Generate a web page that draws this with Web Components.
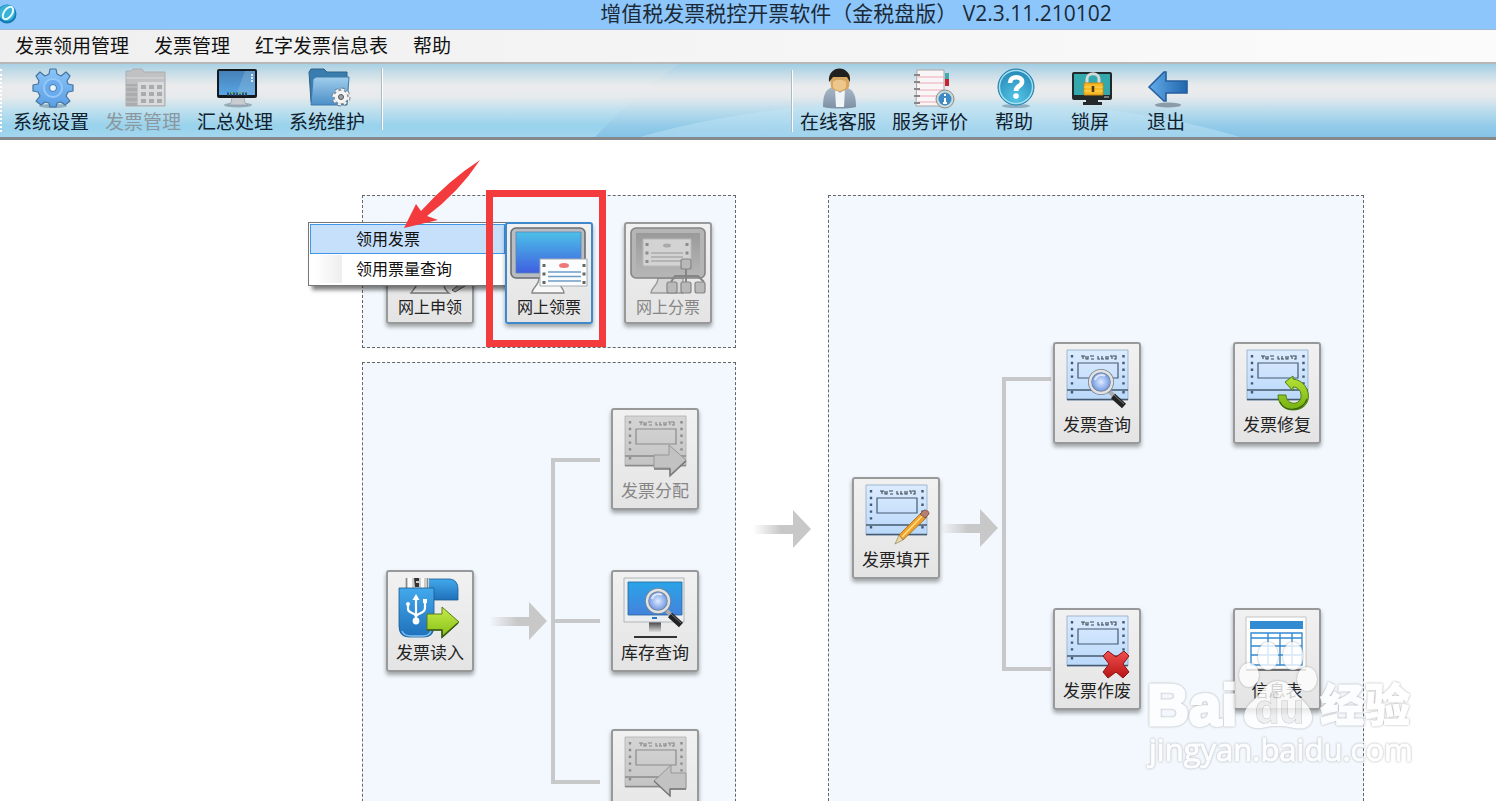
<!DOCTYPE html>
<html lang="zh-CN">
<head>
<meta charset="utf-8">
<title>增值税发票税控开票软件</title>
<style>
  body {
    margin: 0;
    height: 100vh;
    overflow: hidden;
    background: #fff;
    color: #111;
    font-family: "Open Sans", "Noto Sans CJK SC", sans-serif;
  }
</style>
</head>
<body>
<tax-app></tax-app>

<script>
// drawings for the 40x40 toolbar icons
const toolIcons = {
  gear: `
    <defs><linearGradient id="g" x1="0" y1="0" x2="0" y2="1"><stop offset="0" stop-color="#8cc4f8"/><stop offset="1" stop-color="#5a9fe4"/></linearGradient></defs>
    <ellipse cx="20" cy="38" rx="14" ry="2" fill="#6d8ea3" opacity=".6"/>
    <path d="M17 1h6l1 5 4 2 5-4 4 4-3 5 1 3 5 1v6l-5 1-2 4 4 5-5 4-4-3-4 1-1 4h-6l-1-4-4-1-4 3-5-4 4-5-2-4-5-1v-6l5-1 1-3-3-5 4-4 5 4 4-2z" fill="url(#g)" stroke="#43749f" stroke-width="1.2" stroke-linejoin="round"/>
    <circle cx="20" cy="20" r="9" fill="#69abec" stroke="#94c8f8" stroke-width="2"/>
    <circle cx="20" cy="20" r="3.5" fill="#eef4f8" stroke="#3c78b4"/>`,
  ledger: `
    <path d="M1 38V3h5l2-2h9l2 3h21v34z" fill="#bfc1c3" stroke="#acaeb0"/>
    <path d="M1 10h38" stroke="#dcdcdc"/><path d="M1 16h11v22H1z" fill="#aaacae"/>
    <path d="M1 19h11M1 24h11M1 29h11M1 34h11" stroke="#c6c8ca"/>
    <path d="M13 14h26v23H13z" fill="#dadbdc"/>
    <path d="M16 17h5v4h-5zM24 17h5v4h-5zM32 17h5v4h-5zM16 24h5v4h-5zM24 24h5v4h-5zM32 24h5v4h-5zM16 31h5v4h-5zM24 31h5v4h-5zM32 31h5v4h-5z" fill="#a9abad"/>`,
  desktop: `
    <defs><linearGradient id="g" x1="0" y1="0" x2="0" y2="1"><stop offset="0" stop-color="#4680b8"/><stop offset="1" stop-color="#58a7e4"/></linearGradient></defs>
    <ellipse cx="21" cy="37" rx="14" ry="2.5" fill="#7d97a6" opacity=".7"/>
    <path d="M15 29h12l1 6 3 2H11l3-2z" fill="#c9cdd0" stroke="#8c9499" stroke-width=".6"/>
    <rect x="0" y="1" width="40" height="29" rx="2" fill="#15191d"/>
    <path d="M2 3h36v24H2z" fill="url(#g)"/><path d="M28 3h10v24H19z" fill="#8bbbe0" opacity=".4"/>
    <path d="M10 26h20" stroke="#2c4f72" stroke-width="3" stroke-dasharray="2 1"/>
    <path d="M14 25h2M22 25h2" stroke="#59b95c" stroke-width="2"/>
    <path d="M35 6v8" stroke="#ddebf5" stroke-width="2" stroke-dasharray="2 1"/>`,
  folder: `
    <defs><linearGradient id="g" x1="0" y1="0" x2="0" y2="1"><stop offset="0" stop-color="#a0cdec"/><stop offset="1" stop-color="#4b8fc8"/></linearGradient></defs>
    <path d="M0 4l2-3h13l3 3h20v30H2z" fill="#397cae" stroke="#2c638d"/>
    <path d="M4 11l3-2h33l-2 28H2z" fill="url(#g)" stroke="#3f7baa"/>
    <circle cx="32" cy="29" r="7" fill="#f3f4f5" stroke="#72777b"/>
    <circle cx="32" cy="29" r="8" fill="none" stroke="#72777b" stroke-width="3" stroke-dasharray="3 3.3"/>
    <circle cx="32" cy="29" r="7.4" fill="none" stroke="#f3f4f5" stroke-width="2.4" stroke-dasharray="3 2.8"/>
    <circle cx="32" cy="29" r="2.5" fill="#9da3a7" stroke="#555"/>`,
  person: `
    <defs><linearGradient id="g" x1="0" y1="0" x2="0" y2="1"><stop offset="0" stop-color="#a9b9c9"/><stop offset="1" stop-color="#7d90a4"/></linearGradient></defs>
    <path d="M3 39c0-11 2-18 10-20h12c9 2 11 9 11 20-8 2-25 2-33 0z" fill="url(#g)"/>
    <path d="M15 21l5 4 5-4-1 18h-8z" fill="#f1f5f8"/>
    <path d="M10 9c-1-8 20-9 20 0l-1 10c-4 6-14 6-18 0z" fill="#d7a661"/>
    <path d="M9 14C7-4 32-4 30 14l-3-5H13z" fill="#22201f"/>
    <path d="M13 14c3-3 10-3 13 0v5c-3 5-10 5-13 0z" fill="#edc68b"/>`,
  notes: `
    <path d="M5 2h27v36H4z" fill="#f8f6f7" stroke="#a9a4a6"/>
    <path d="M6 9h26M6 15h26M6 22h26M6 28h26M6 34h20" stroke="#efaab5"/>
    <path d="M2 7h6M2 14h6M2 21h6M2 28h6M2 35h6" stroke="#8b8687" stroke-width="2"/>
    <path d="M33 5h4v6h-4z" fill="#44a9b0"/><path d="M33 11h4v7h-4z" fill="#c8242f"/>
    <circle cx="33" cy="31" r="9" fill="#cfd8d6" stroke="#82918e"/><circle cx="33" cy="31" r="6.5" fill="#3e8cc6"/>
    <path d="M33 30v5M33 26v2M31 35h4" stroke="#fff" stroke-width="2"/>`,
  help: `
    <defs><radialGradient id="g" cx=".5" cy=".8" r=".8"><stop offset="0" stop-color="#54c5e6"/><stop offset="1" stop-color="#2486b5"/></radialGradient></defs>
    <ellipse cx="20" cy="38" rx="14" ry="2" fill="#6d8ea3" opacity=".6"/>
    <circle cx="20" cy="19" r="18" fill="url(#g)" stroke="#2481ac"/>
    <circle cx="20" cy="19" r="16.5" fill="none" stroke="#a5def0" stroke-width="1.4"/>
    <path d="M14 15c0-8 13-7 12-1 0 4-6 4-6 9" fill="none" stroke="#fff" stroke-width="4.6"/><circle cx="20" cy="28" r="2.8" fill="#fff"/>`,
  lock: `
    <path d="M14 30h12v4h4v3H11v-3h3z" fill="#24282a"/>
    <rect x="0" y="4" width="40" height="28" rx="2" fill="#23282b"/>
    <path d="M2 6h36v21H2z" fill="#33a9ae"/><path d="M32 29h5" stroke="#d0d0d0"/>
    <path d="M15 17v-6c0-7 12-7 12 0v6" fill="none" stroke="#d5d9d8" stroke-width="3"/>
    <path d="M12 15h19v12H12z" fill="#f7ba25" stroke="#c98613"/><path d="M12 19h19M12 23h19" stroke="#ffd75b"/>
    <path d="M21 18v6" stroke="#54370c" stroke-width="2.6"/>`,
  back: `
    <defs><linearGradient id="g"><stop offset="0" stop-color="#63abe9"/><stop offset="1" stop-color="#2066ac"/></linearGradient></defs>
    <ellipse cx="20" cy="37" rx="13" ry="2.6" fill="#798b97" opacity=".8"/>
    <path d="M1 19L16 4h2v9h21v12H18v8h-2z" fill="url(#g)" stroke="#255f9f" stroke-width="1.6"/>`
};

// invoice sheet, shared by most of the tiles
function sheet(grey) {
  const line = grey ? "#8b8b8b" : "#46596f";
  const marks = grey ? "#858585" : "#3d4650";
  return `
    <defs><linearGradient id="s" x1="0" y1="0" x2="0" y2="1">
      <stop offset="0" stop-color="${grey ? "#d5d5d5" : "#dcecff"}"/><stop offset="1" stop-color="${grey ? "#c4c4c4" : "#b9d8fa"}"/>
    </linearGradient></defs>
    <path d="M14 8h61v50H14z" fill="url(#s)" stroke="${grey ? "#b0b0b0" : "#8fa9c8"}" stroke-width=".8"/>
    <path d="M25 21h40v15H25z" fill="none" stroke="${line}" stroke-width="1.2"/>
    <path d="M14 48h61M14 57.5h61" stroke="${line}" stroke-width="1.6"/>
    <path d="M19 13v34M70.5 13v34M19 49v4M70.5 49v4" stroke="${line}" stroke-width="2.4" stroke-dasharray="2.4 4.4"/>
    <path d="M28 14h4M30 14v3M33 14v3h2v-3M37 14h4M38 17h3M45 14v3h2M49 14v3M48 17h3M53 14v3h2v-3M57 14h2v3M60 14h3v3h-2" fill="none" stroke="${marks}" stroke-width="1.1"/>`;
}

function magnifier(x, y) {
  return `<g transform="translate(${x} ${y})">
    <defs><radialGradient id="m"><stop offset="0" stop-color="#dfeaff"/><stop offset="1" stop-color="#5d8be0"/></radialGradient></defs>
    <path d="M8 9l5 5" stroke="#aaa" stroke-width="4"/>
    <path d="M12 14l11 10" stroke="#222" stroke-width="6"/><path d="M13 13l10 9" stroke="#777" stroke-width="1"/>
    <circle r="11" fill="url(#m)" stroke="#7b8189" stroke-width="4"/><circle r="11" fill="none" stroke="#dfe3e8" stroke-width="2.4"/>
    <path d="M-6-2c1-5 7-6 10-4" fill="none" stroke="#fff" stroke-width="2" opacity=".7"/></g>`;
}

// drawings for the tiles, in the tile's own pixels
const tileIcons = {
  apply: `
    <path d="M6 5h74v52H6z" fill="#bbb" stroke="#777" stroke-width="2"/>
    <path d="M33 56c0 6-5 11-8 15h38c-5-3-6-9-6-15z" fill="#f5f5f5" stroke="#777" stroke-width="1.4"/>
    <path d="M66 68l3 2 15-9-3-4z" fill="#aaa" stroke="#555"/>`,
  receive: `
    <defs><linearGradient id="g" x1="0" y1="0" x2="0" y2="1"><stop offset="0" stop-color="#4cc0e8"/><stop offset="1" stop-color="#405fe0"/></linearGradient></defs>
    <path d="M34 56c0 8-7 9-7 15h32c0-5-6-7-6-15z" fill="#f8f8f8" stroke="#888" stroke-width="1.4"/>
    <rect x="6" y="6" width="74" height="50" rx="5" fill="#b9bcc0" stroke="#696d72" stroke-width="1.6"/>
    <path d="M11 10h65v41H11z" fill="url(#g)" stroke="#5884b8" stroke-width=".8"/>
    <path d="M35 37h47v27H35z" fill="#fbfcfd" stroke="#a5abb1"/>
    <path d="M39 42v20M79 42v20" stroke="#666" stroke-width="3" stroke-dasharray="3 5.5"/>
    <ellipse cx="59" cy="43.5" rx="5" ry="2.5" fill="#ee7777"/>
    <path d="M43 50h33M43 54.5h33M43 59h33" stroke="#6d9cc8" stroke-width="1.6"/>`,
  share: `
    <defs><linearGradient id="g" x1="0" y1="0" x2="0" y2="1"><stop offset="0" stop-color="#9a9a9a"/><stop offset="1" stop-color="#b4b4b4"/></linearGradient></defs>
    <path d="M34 56c0 8-7 9-7 15h32V56z" fill="#d6d6d6" stroke="#9b9b9b" stroke-width="1.4"/>
    <rect x="7" y="6" width="74" height="50" rx="5" fill="#b5b5b5" stroke="#858585" stroke-width="1.6"/>
    <path d="M12 11h64v40H12z" fill="url(#g)"/>
    <path d="M19 17h48v27H19z" fill="#d3d3d3" stroke="#b8b8b8"/>
    <path d="M23 21v20M63 21v20" stroke="#8c8c8c" stroke-width="3" stroke-dasharray="3 5.5"/>
    <ellipse cx="43" cy="23.5" rx="4" ry="2" fill="#aaa"/><path d="M27 31h32M27 35h32M27 39h32" stroke="#aaa" stroke-width="1.4"/>
    <path d="M62 46v8M47 60l4-6h23l6 6M62 54v6" fill="none" stroke="#858585" stroke-width="2"/>
    <g fill="#b9b9b9" stroke="#858585" stroke-width="1.2"><rect x="57" y="37" width="10" height="10" rx="2"/><rect x="43" y="60" width="10" height="11" rx="2"/><rect x="57" y="60" width="10" height="11" rx="2"/><rect x="71" y="60" width="10" height="11" rx="2"/></g>`,
  assign: sheet(true) + `<path d="M43 47h15v-10l17 15-16 15v-7H43z" fill="#c2c2c2" stroke="#979797"/><path d="M43 61h16v7l16-15" fill="none" stroke="#777" stroke-width="1.4"/>`,
  giveback: sheet(true) + `<path d="M75 44H60v-8L43 52l16 15v-7h16z" fill="#c2c2c2" stroke="#979797"/><path d="M43 52l16 15v-7h16" fill="none" stroke="#777" stroke-width="1.4"/>`,
  usb: `
    <defs><linearGradient id="g" x1="0" y1="0" x2="0" y2="1"><stop offset="0" stop-color="#43a9ec"/><stop offset="1" stop-color="#1f70ba"/></linearGradient>
    <linearGradient id="a" x1="0" y1="0" x2="0" y2="1"><stop offset="0" stop-color="#c9ec4b"/><stop offset="1" stop-color="#82be13"/></linearGradient></defs>
    <path d="M40 9h24q8 1 8 10v11H44z" fill="url(#g)" stroke="#195b93" stroke-width=".8"/>
    <path d="M19 8h24v10H19z" fill="#ccc"/><path d="M22 8h4v10h-4zM35 8h3v10h-3z" fill="#fafafa"/>
    <path d="M20.500 8v10M41.500 8v10" stroke="#888"/><path d="M28 8h5v3h-3v2h3v4h-4z" fill="#333"/>
    <path d="M13 18h35v38q0 11-10 11H23q-10 0-10-11z" fill="url(#g)" stroke="#195b93" stroke-width=".8"/>
    <path d="M16 61q2 5 9 5h12q6 0 8-5" fill="none" stroke="#7dc2f2" stroke-width="1.4"/>
    <path d="M30 50V28M22 34v5c0 5 8 3 8 8 0-4 9-3 9-9v-5" fill="none" stroke="#fff" stroke-width="2.2"/>
    <path d="M26.5 30l3.500-6 3.500 6z" fill="#fff"/><circle cx="30" cy="51" r="3.4" fill="#fff"/><circle cx="22" cy="34" r="2" fill="#fff"/><path d="M37 29h4v4h-4z" fill="#fff"/>
    <path d="M41 44h15v-7l17 15-17 16v-8H41z" fill="url(#a)" stroke="#577b1b"/><path d="M41 60h15v7l16-14" fill="none" stroke="#3e5b16" stroke-width="1.6"/>`,
  stock: `
    <defs><linearGradient id="g" x1="0" y1="0" x2="0" y2="1"><stop offset="0" stop-color="#2aa4e8"/><stop offset="1" stop-color="#4482dc"/></linearGradient>
    <linearGradient id="n" x1="0" y1="0" x2="0" y2="1"><stop offset="0" stop-color="#444"/><stop offset="1" stop-color="#ddd"/></linearGradient></defs>
    <path d="M38 52h12v10H38z" fill="url(#n)"/>
    <path d="M13 8h60v44H13z" fill="#eceff2" stroke="#b2b5b8"/><path d="M17 12h54v33H17z" fill="url(#g)" stroke="#24669b" stroke-width=".8"/>
    <path d="M41 48h5" stroke="#2677c9" stroke-width="2"/><path d="M23 67h43" stroke="#333" stroke-width="2"/>` + magnifier(47, 31),
  query: sheet() + magnifier(48, 40),
  fill: sheet() + `
    <path d="M47 58L70 35l5 5-24 23z" fill="#f0a22b" stroke="#a3671b" stroke-width=".8"/><path d="M50 60l22-23" stroke="#ffe08a" stroke-width="1.4"/>
    <path d="M47 58l4 5-8 4z" fill="#ead7a4" stroke="#8a7b52" stroke-width=".6"/><path d="M68 37l4-4q5 0 5 4l-4 4z" fill="#b77f70" stroke="#6e4a40" stroke-width=".8"/>`,
  repair: sheet() + `
    <defs><linearGradient id="a" x1="0" y1="0" x2="0" y2="1"><stop offset="0" stop-color="#b9e336"/><stop offset="1" stop-color="#75b012"/></linearGradient></defs>
    <path d="M52 40l8-6v3c19 2 22 31 0 31-10 0-15-7-15-15h8c0 11 16 11 15 0 0-5-4-8-8-8v4z" fill="url(#a)" stroke="#4b7d12"/>
    <path d="M47 60c5 11 23 9 27-3" fill="none" stroke="#36600b" stroke-width="1.2"/>`,
  cancel: sheet() + `
    <defs><linearGradient id="a" x1="0" y1="0" x2="0" y2="1"><stop offset="0" stop-color="#f05050"/><stop offset="1" stop-color="#b91414"/></linearGradient></defs>
    <path d="M50 48l5-5 8 6 8-6 5 5-6 8 6 8-6 6-7-6-8 6-5-6 6-8z" fill="url(#a)" stroke="#8c1111"/>`,
  table: `
    <path d="M13 9h60v52H13z" fill="#fff" stroke="#b7b7b7" stroke-width=".8"/><path d="M17 13h53v8H17z" fill="#338bd2"/>
    <path d="M18 25h51v32H18zM18 30h51M18 38h51M18 47h51M35 25v32M47 25v32M59 25v32" fill="none" stroke="#338bd2" stroke-width="1.4"/>
    <path d="M13 62h60" stroke="#444" stroke-width="1.6"/>`
};

class TitleBar extends HTMLElement {
  constructor() {
    super();
    this.attachShadow({mode: "open"});
    this.shadowRoot.innerHTML = `
      <style>
        :host { display: flex; align-items: flex-start; height: 29px; background: #8cc6fb; border-bottom: 1px solid #a3b7d6; }
        svg { width: 18px; height: 20px; flex: none; margin-top: 4px; }
        h1 { flex: 1; margin: 0 0 0 198px; font-size: 21px; line-height: 26px; font-weight: 400; text-align: center; white-space: nowrap; color: #1c2a38; }
      </style>
      <svg viewBox="0 0 18 20">
        <circle cx="7" cy="10" r="9.5" fill="#147bb5"/><circle cx="7" cy="9" r="8" fill="#3bb3d8"/>
        <ellipse cx="8" cy="9" rx="4" ry="7" transform="rotate(35 8 9)" fill="none" stroke="#e5fbff" stroke-width="2"/>
      </svg>
      <h1><slot></slot></h1>`;
  }
}
customElements.define("title-bar", TitleBar);

class MenuBar extends HTMLElement {
  constructor() {
    super();
    this.attachShadow({mode: "open"});
    const items = this.getAttribute("items").split(",");
    this.shadowRoot.innerHTML = `
      <style>
        :host { display: block; background: linear-gradient(90deg, #efefef, #fbfbfb); border-bottom: 2px solid #b5b7b9; }
        nav { display: flex; gap: 25px; padding: 0 15px; }
        button { border: 0; padding: 0; background: none; font: inherit; font-size: 19px; line-height: 32px; color: #111; }
      </style>
      <nav>${items.map(item => `<button>${item}</button>`).join("")}</nav>`;
  }
}
customElements.define("menu-bar", MenuBar);

class ToolButton extends HTMLElement {
  constructor() {
    super();
    this.attachShadow({mode: "open"});
    this.shadowRoot.innerHTML = `
      <style>
        :host { display: block; min-width: 60px; }
        button { display: flex; flex-direction: column; align-items: center; width: 100%; border: 0; padding: 0; background: none; font: inherit; font-size: 19px; line-height: 24px; color: #10202c; white-space: nowrap; }
        button:disabled { color: #8b979e; }
        svg { width: 42px; height: 42px; overflow: visible; }
      </style>
      <button ${this.hasAttribute("disabled") ? "disabled" : ""}>
        <svg viewBox="-3 0 42 42">${toolIcons[this.getAttribute("icon")]}</svg>
        <slot></slot>
      </button>`;
  }
}
customElements.define("tool-button", ToolButton);

class ToolStrip extends HTMLElement {
  constructor() {
    super();
    this.attachShadow({mode: "open"});
    this.shadowRoot.innerHTML = `
      <style>
        :host {
          display: grid; grid-template: 73px / 792fr 704fr; position: relative; border-bottom: 3px solid #85898c;
          background: linear-gradient(#a9d1e4, #cbdfe8 10px, #ebebec 22px, #e6eaec 33px, #bfe0ee 46px, #98d2ec 62px, #a3d6ee);
        }
        .swoosh { position: absolute; inset: 0; width: 100%; height: 100%; }
        .group { position: relative; display: flex; gap: 16px; padding: 4px 0 0 13px; }
        .right { padding-left: 8px; }
        .grip { position: absolute; left: 0; top: 5px; bottom: 5px; border-left: 2px dotted #fff; }
        .left::after, .right::before { content: ""; width: 1px; height: 62px; border-left: 1px solid #a9bcc6; background: #fff; }
        .right::before { position: absolute; left: -1px; top: 6px; }
      </style>
      <svg class="swoosh" viewBox="0 0 1496 73" preserveAspectRatio="none">
        <defs><linearGradient id="w" x1="0" y1="0" x2="0" y2="1"><stop offset="0" stop-color="#9acbe3" stop-opacity=".6"/><stop offset=".35" stop-color="#eee" stop-opacity=".1"/><stop offset="1" stop-color="#6fb6e2" stop-opacity=".6"/></linearGradient></defs>
        <path d="M595 73Q640 25 680 0H1496V73z" fill="url(#w)"/>
        <path d="M640 73Q720 50 830 40Q1080 25 1240 73z" fill="#c3e7f7" opacity=".45"/>
      </svg>
      <div class="group left"><span class="grip"></span><slot></slot></div>
      <div class="group right"><slot name="right"></slot></div>`;
  }
}
customElements.define("tool-strip", ToolStrip);

class FlowTile extends HTMLElement {
  constructor() {
    super();
    this.attachShadow({mode: "open"});
    this.shadowRoot.innerHTML = `
      <style>
        :host { display: block; width: 88px; height: 102px; }
        button {
          display: flex; flex-direction: column; align-items: center; box-sizing: border-box; width: 100%; height: 100%; padding: 0;
          border: 2px solid #97999b; border-radius: 3px; background: linear-gradient(#f1f1f1, #e4e4e4);
          box-shadow: 0 3px 4px rgba(0, 0, 0, .35); font: inherit; font-size: 17px; line-height: 20px; color: #222; white-space: nowrap;
        }
        svg { width: 84px; height: 71px; flex: none; }
        button:disabled { color: #868686; }
        :host([active]) button { border-color: #3e88cc; }
        :host([small]) button { font-size: 16px; line-height: 24px; }
      </style>
      <button ${this.hasAttribute("disabled") ? "disabled" : ""}>
        <svg viewBox="2 2 84 71">${tileIcons[this.getAttribute("icon")]}</svg>
        <slot></slot>
      </button>`;
  }
}
customElements.define("flow-tile", FlowTile);

class FlowArrow extends HTMLElement {
  constructor() {
    super();
    this.attachShadow({mode: "open"});
    this.shadowRoot.innerHTML = `
      <style>
        :host { display: block; width: 58px; height: 38px; }
        svg { display: block; }
      </style>
      <svg width="58" height="38">
        <defs><linearGradient id="g"><stop offset="0" stop-color="#c8c8c8" stop-opacity="0"/><stop offset=".7" stop-color="#c8c8c8"/></linearGradient></defs>
        <path d="M0 15h40v9H0z" fill="url(#g)"/><path d="M40 0l18 19-18 19z" fill="#c8c8c8"/>
      </svg>`;
  }
}
customElements.define("flow-arrow", FlowArrow);

class FlowBracket extends HTMLElement {
  constructor() {
    super();
    this.attachShadow({mode: "open"});
    this.shadowRoot.innerHTML = `
      <style>
        :host { display: block; box-sizing: border-box; border: 4px solid #c6c8ca; border-right: 0; }
        :host([middle]) { background: linear-gradient(#c6c8ca, #c6c8ca) 0 50% / 100% 4px no-repeat; }
      </style>`;
  }
}
customElements.define("flow-bracket", FlowBracket);

class DropMenu extends HTMLElement {
  constructor() {
    super();
    this.attachShadow({mode: "open"});
    const items = this.getAttribute("items").split(",");
    this.shadowRoot.innerHTML = `
      <style>
        :host { display: block; box-sizing: border-box; width: 199px; padding: 1px; border: 1px solid #777; background: #fff; box-shadow: 4px 4px 4px rgba(0, 0, 0, .5); }
        button {
          display: block; box-sizing: border-box; width: 100%; border: 1px solid transparent; padding: 0 0 0 45px; text-align: left;
          font: inherit; font-size: 16px; line-height: 28px; color: #111; background: linear-gradient(90deg, #fff, #eee) 3px 0 / 28px 100% no-repeat;
        }
        button:first-of-type { border-color: #3f96e8; background: #c6e0fb; }
      </style>
      ${items.map(item => `<button>${item}</button>`).join("")}`;
  }
}
customElements.define("drop-menu", DropMenu);

class WaterMark extends HTMLElement {
  constructor() {
    super();
    this.attachShadow({mode: "open"});
    this.shadowRoot.innerHTML = `
      <style>
        :host { display: block; pointer-events: none; }
        svg { display: block; filter: drop-shadow(0 0 1px #999); opacity: .8; }
        text { fill: #fff; stroke: #fff; stroke-width: 1px; paint-order: stroke; }
        .name { font: 700 58px "Liberation Sans", sans-serif; stroke-width: 3px; }
        .du { font: 700 40px "Liberation Sans", sans-serif; fill: #eee; stroke: #bbb; }
        .cn { font: 900 45px "Noto Sans CJK SC", sans-serif; }
        .url { font: 400 31px "Open Sans", sans-serif; }
      </style>
      <svg width="276" height="140">
        <text class="name" x="1" y="89">Bai</text>
        <g fill="#fff">
          <ellipse cx="103" cy="39" rx="10" ry="12"/><ellipse cx="122" cy="20" rx="10" ry="14"/>
          <ellipse cx="147" cy="20" rx="10" ry="14"/><ellipse cx="161" cy="43" rx="10" ry="12"/>
          <path d="M132 45c12 0 15 11 24 19 18 16 10 32-8 28q-16-4-32 0c-20 3-24-16-8-28 9-8 12-19 24-19z"/>
        </g>
        <text class="du" x="109" y="87">du</text>
        <text class="cn" x="174" y="86">经验</text>
        <text class="url" x="3" y="125">jingyan.baidu.com</text>
      </svg>`;
  }
}
customElements.define("water-mark", WaterMark);

class TaxApp extends HTMLElement {
  constructor() {
    super();
    this.attachShadow({mode: "open"});
    this.shadowRoot.innerHTML = `
      <style>
        :host { display: flex; flex-direction: column; height: 100%; overflow: hidden; }
        main {
          flex: 1; min-height: 0; position: relative; display: grid; grid-template-columns: 374fr 92px 536fr;
          padding: 55px 132px 0 362px; overflow: hidden;
        }
        .side { display: grid; grid-template-rows: 153px auto; row-gap: 14px; min-height: 0; }
        .panel { box-sizing: border-box; border: 1px dashed #666; background: #f2f8fd; }
        .online { position: relative; display: flex; justify-content: center; align-items: flex-start; gap: 31px; padding-top: 26px; }
        .stock { display: grid; grid-template: 102px 60px 102px 57px 102px / 88px 77px 60px 88px; justify-content: start; padding: 45px 0 20px 23px; }
        .issue {
          display: grid; grid-template: 102px 33px 102px 29px 102px / 88px 62px 51px 88px 92px 88px;
          justify-content: start; align-content: start; padding: 146px 0 100px 23px;
        }
        .row3 { grid-row: 3; }
        .row5 { grid-row: 5; }
        .col4 { grid-column: 4; }
        .col6 { grid-column: 6; }
        .stock flow-arrow, .issue flow-arrow { align-self: center; justify-self: end; margin-right: 4px; }
        flow-bracket { grid-column: 3; grid-row: 1 / 6; width: 49px; }
        .stock flow-bracket { margin: 50px 0 47px; }
        .issue flow-bracket { margin: 35px 0 39px; }
        .between { justify-self: center; margin-top: 315px; }
        drop-menu { position: absolute; left: -55px; top: 26px; z-index: 2; }
        flow-tile[active] { position: relative; z-index: 3; }
        .frame { position: absolute; left: 123px; top: -6px; width: 120px; height: 157px; box-sizing: border-box; border: 7px solid #f33b3d; z-index: 4; }
        .pointer { position: absolute; left: 38px; top: -38px; z-index: 4; }
        water-mark { position: absolute; right: 74px; top: 496px; z-index: 5; }
      </style>
      <title-bar>增值税发票税控开票软件（金税盘版） V2.3.11.210102</title-bar>
      <menu-bar items="发票领用管理,发票管理,红字发票信息表,帮助"></menu-bar>
      <tool-strip>
        <tool-button icon="gear">系统设置</tool-button>
        <tool-button icon="ledger" disabled>发票管理</tool-button>
        <tool-button icon="desktop">汇总处理</tool-button>
        <tool-button icon="folder">系统维护</tool-button>
        <tool-button slot="right" icon="person">在线客服</tool-button>
        <tool-button slot="right" icon="notes">服务评价</tool-button>
        <tool-button slot="right" icon="help">帮助</tool-button>
        <tool-button slot="right" icon="lock">锁屏</tool-button>
        <tool-button slot="right" icon="back">退出</tool-button>
      </tool-strip>
      <main>
        <div class="side">
          <section class="panel online">
            <flow-tile small icon="apply">网上申领</flow-tile>
            <flow-tile small active icon="receive">网上领票</flow-tile>
            <flow-tile small disabled icon="share">网上分票</flow-tile>
            <drop-menu items="领用发票,领用票量查询"></drop-menu>
            <div class="frame"></div>
            <svg class="pointer" width="82" height="72"><path d="M79 2Q58 34 26 58l11 4L3 70l12-24 5 7Q48 22 79 2z" fill="#f33b3d"/></svg>
          </section>
          <section class="panel stock">
            <flow-tile class="row3" icon="usb">发票读入</flow-tile>
            <flow-arrow class="row3"></flow-arrow>
            <flow-bracket middle></flow-bracket>
            <flow-tile class="col4" disabled icon="assign">发票分配</flow-tile>
            <flow-tile class="col4 row3" icon="stock">库存查询</flow-tile>
            <flow-tile class="col4 row5" disabled icon="giveback"></flow-tile>
          </section>
        </div>
        <flow-arrow class="between"></flow-arrow>
        <section class="panel issue">
          <flow-tile class="row3" icon="fill">发票填开</flow-tile>
          <flow-arrow class="row3"></flow-arrow>
          <flow-bracket></flow-bracket>
          <flow-tile class="col4" icon="query">发票查询</flow-tile>
          <flow-tile class="col6" icon="repair">发票修复</flow-tile>
          <flow-tile class="col4 row5" icon="cancel">发票作废</flow-tile>
          <flow-tile class="col6 row5" icon="table">信息表</flow-tile>
        </section>
        <water-mark></water-mark>
      </main>`;
  }
}
customElements.define("tax-app", TaxApp);
</script>
</body>
</html>
